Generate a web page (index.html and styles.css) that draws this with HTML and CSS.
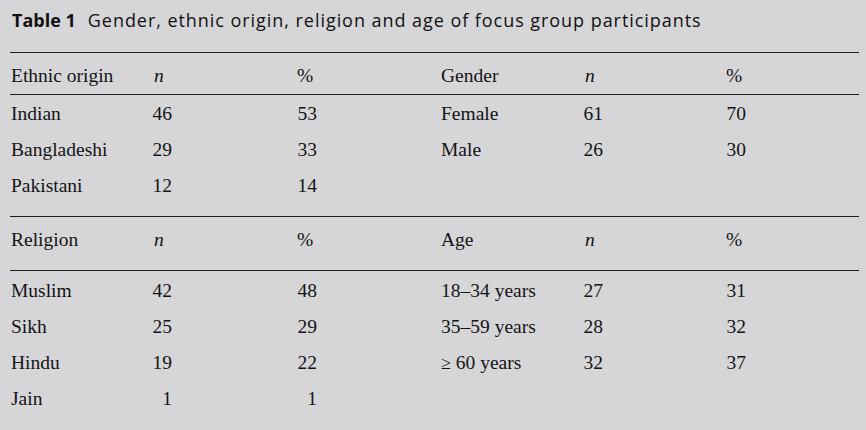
FILE: index.html
```html
<!DOCTYPE html>
<html lang="en">
<head>
<meta charset="utf-8">
<title>Table 1</title>
<link rel="stylesheet" href="styles.css">
</head>
<body>
<div class="page">
  <h1 class="caption"><span class="label">Table 1</span><span class="caption-text">Gender, ethnic origin, religion and age of focus group participants</span></h1>

  <section class="block">
    <div class="grid head head-first">
      <div class="cell">Ethnic origin</div>
      <div class="cell"><i>n</i></div>
      <div class="cell">%</div>
      <div class="cell">Gender</div>
      <div class="cell"><i>n</i></div>
      <div class="cell">%</div>
    </div>
    <div class="grid body body-first">
      <div class="cell">Indian</div>
      <div class="cell"><span class="num">46</span></div>
      <div class="cell"><span class="num">53</span></div>
      <div class="cell">Female</div>
      <div class="cell"><span class="num">61</span></div>
      <div class="cell"><span class="num">70</span></div>

      <div class="cell">Bangladeshi</div>
      <div class="cell"><span class="num">29</span></div>
      <div class="cell"><span class="num">33</span></div>
      <div class="cell">Male</div>
      <div class="cell"><span class="num">26</span></div>
      <div class="cell"><span class="num">30</span></div>

      <div class="cell">Pakistani</div>
      <div class="cell"><span class="num">12</span></div>
      <div class="cell"><span class="num">14</span></div>
      <div class="cell"></div>
      <div class="cell"></div>
      <div class="cell"></div>
    </div>
  </section>

  <section class="block">
    <div class="grid head head-second">
      <div class="cell">Religion</div>
      <div class="cell"><i>n</i></div>
      <div class="cell">%</div>
      <div class="cell">Age</div>
      <div class="cell"><i>n</i></div>
      <div class="cell">%</div>
    </div>
    <div class="grid body body-second">
      <div class="cell">Muslim</div>
      <div class="cell"><span class="num">42</span></div>
      <div class="cell"><span class="num">48</span></div>
      <div class="cell">18–34 years</div>
      <div class="cell"><span class="num">27</span></div>
      <div class="cell"><span class="num">31</span></div>

      <div class="cell">Sikh</div>
      <div class="cell"><span class="num">25</span></div>
      <div class="cell"><span class="num">29</span></div>
      <div class="cell">35–59 years</div>
      <div class="cell"><span class="num">28</span></div>
      <div class="cell"><span class="num">32</span></div>

      <div class="cell">Hindu</div>
      <div class="cell"><span class="num">19</span></div>
      <div class="cell"><span class="num">22</span></div>
      <div class="cell"><span class="geq">≥</span> 60 years</div>
      <div class="cell"><span class="num">32</span></div>
      <div class="cell"><span class="num">37</span></div>

      <div class="cell">Jain</div>
      <div class="cell"><span class="num">1</span></div>
      <div class="cell"><span class="num">1</span></div>
      <div class="cell"></div>
      <div class="cell"></div>
      <div class="cell"></div>
    </div>
  </section>
</div>
</body>
</html>
```

FILE: styles.css
```css
html, body {
  margin: 0;
  padding: 0;
  background: #d6d6d9;
}

body {
  color: #141414;
  font-family: "Liberation Serif", "Times New Roman", serif;
  font-size: 19.5px;
}

.page {
  width: 849px;
  padding: 0 7px 0 10px;
}

.caption {
  margin: 0 0 19px 0;
  padding: 8px 0 0 2px;
  font-family: "Open Sans", "DejaVu Sans", sans-serif;
  font-size: 18px;
  line-height: 25px;
  font-weight: 400;
  color: #111;
  white-space: nowrap;
}

.caption .label {
  font-weight: 700;
  margin-right: 12px;
}

.caption .caption-text {
  letter-spacing: 0.95px;
}

.block {
  border-top: 1px solid #1e1e1e;
}

.grid {
  display: grid;
  grid-template-columns: 141px 145px 144px 142px 143px 1fr;
  padding-left: 1px;
  line-height: 36px;
}

.head {
  border-bottom: 1px solid #1e1e1e;
}

.head-first {
  padding-top: 5px;
}

.head-second {
  padding-top: 5px;
  padding-bottom: 12px;
}

.body-first {
  padding-top: 1px;
  padding-bottom: 12px;
}

.body-second {
  padding-top: 2px;
  padding-bottom: 14px;
}

.cell {
  white-space: nowrap;
}

.cell i {
  font-style: italic;
  padding-left: 2px;
}

.num {
  display: inline-block;
  width: 20px;
  text-align: right;
}

.geq {
  font-size: 18px;
}
```
